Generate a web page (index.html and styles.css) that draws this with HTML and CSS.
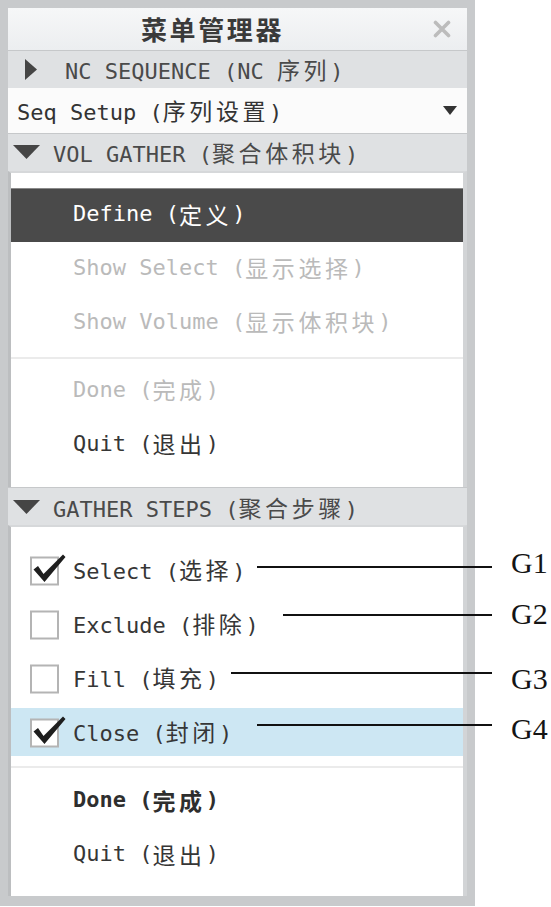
FILE: index.html
```html
<!DOCTYPE html>
<html lang="zh-CN">
<head>
<meta charset="utf-8">
<title>菜单管理器</title>
<link rel="stylesheet" href="styles.css">
</head>
<body>
<div class="page">
  <div class="panel">
    <div class="titlebar">
      <div class="title">菜单管理器</div>
      <div class="close">
        <svg width="18" height="18" viewBox="0 0 18 18"><path d="M2.5 2.5L15.5 15.5M15.5 2.5L2.5 15.5" stroke="#bcbcbc" stroke-width="3.6" stroke-linecap="round"/></svg>
      </div>
    </div>

    <div class="hdr">
      <svg class="tri-right" width="12" height="21" viewBox="0 0 12 21"><polygon points="0,0 12,10.5 0,21" fill="#454545"/></svg>
      <span>NC SEQUENCE (NC <span class="zh">序列</span>)</span>
    </div>

    <div class="seq">
      <span>Seq Setup (<span class="zh">序列设置</span>)</span>
      <svg width="14" height="9" viewBox="0 0 14 9"><polygon points="0,0 14,0 7,9" fill="#333"/></svg>
    </div>

    <div class="hdr">
      <svg class="tri-down" width="27" height="14" viewBox="0 0 27 14"><polygon points="0,0 27,0 13.5,14" fill="#454545"/></svg>
      <span>VOL GATHER (<span class="zh">聚合体积块</span>)</span>
    </div>

    <div class="body body-vol">
      <div class="item active">Define (<span class="zh">定义</span>)</div>
      <div class="item off">Show Select (<span class="zh">显示选择</span>)</div>
      <div class="item off">Show Volume (<span class="zh">显示体积块</span>)</div>
      <div class="sep"></div>
      <div class="item off">Done (<span class="zh">完成</span>)</div>
      <div class="item">Quit (<span class="zh">退出</span>)</div>
    </div>

    <div class="hdr">
      <svg class="tri-down" width="27" height="14" viewBox="0 0 27 14"><polygon points="0,0 27,0 13.5,14" fill="#454545"/></svg>
      <span>GATHER STEPS (<span class="zh">聚合步骤</span>)</span>
    </div>

    <div class="body body-steps">
      <div class="chk">
        <svg width="36" height="32" viewBox="0 0 36 32"><rect x="1" y="3.5" width="27" height="27" fill="#fff" stroke="#b4b4b4" stroke-width="2"/><path d="M3.5 15.5L8 12L13.5 20L33 0.5L35.5 3L14.5 28Z" fill="#1e1e1e"/></svg>
        <span class="lbl">Select (<span class="zh">选择</span>)</span>
      </div>
      <div class="chk">
        <svg width="36" height="32" viewBox="0 0 36 32"><rect x="1" y="3.5" width="27" height="27" fill="#fff" stroke="#b4b4b4" stroke-width="2"/></svg>
        <span class="lbl">Exclude (<span class="zh">排除</span>)</span>
      </div>
      <div class="chk">
        <svg width="36" height="32" viewBox="0 0 36 32"><rect x="1" y="3.5" width="27" height="27" fill="#fff" stroke="#b4b4b4" stroke-width="2"/></svg>
        <span class="lbl">Fill (<span class="zh">填充</span>)</span>
      </div>
      <div class="chk hl">
        <svg width="36" height="32" viewBox="0 0 36 32"><rect x="1" y="3.5" width="27" height="27" fill="#fff" stroke="#b4b4b4" stroke-width="2"/><path d="M3.5 15.5L8 12L13.5 20L33 0.5L35.5 3L14.5 28Z" fill="#1e1e1e"/></svg>
        <span class="lbl">Close (<span class="zh">封闭</span>)</span>
      </div>
      <div class="sep sep2"></div>
      <div class="item strong">Done (<span class="zh">完成</span>)</div>
      <div class="item">Quit (<span class="zh">退出</span>)</div>
    </div>
  </div>

  <div class="callout line1"></div>
  <div class="callout line2"></div>
  <div class="callout line3"></div>
  <div class="callout line4"></div>
  <div class="tag tag1">G1</div>
  <div class="tag tag2">G2</div>
  <div class="tag tag3">G3</div>
  <div class="tag tag4">G4</div>
</div>
</body>
</html>
```

FILE: styles.css
```css
* { box-sizing: border-box; }
html, body { margin: 0; padding: 0; background: #fff; }

.page {
  position: relative;
  width: 551px;
  height: 907px;
}

.panel {
  width: 475px;
  height: 906px;
  background: #c8cacc;
  padding: 8px 8px 10px 8px;
  display: flex;
  flex-direction: column;
  font-family: "DejaVu Sans Mono", "Noto Sans CJK SC", monospace;
  font-size: 22px;
  color: #363636;
}

.zh {
  font-family: "Noto Sans CJK SC", sans-serif;
  font-size: 23px;
  letter-spacing: 3.6px;
}

.titlebar {
  height: 42px;
  display: flex;
  align-items: center;
  background: linear-gradient(#f6f7f8, #eceef0);
}
.title {
  flex: 1;
  text-align: center;
  font-family: "Noto Sans CJK SC", sans-serif;
  font-weight: 700;
  font-size: 26px;
  letter-spacing: 2.6px;
  color: #3a3a3a;
}
.close {
  width: 50px;
  display: flex;
  justify-content: center;
  align-items: center;
}

.hdr {
  height: 38px;
  display: flex;
  align-items: center;
  background: #dfe1e3;
  border-top: 1px solid #c6c8ca;
  color: #4a4a4a;
}
.hdr:first-of-type { height: 37px; }
.tri-right { margin-left: 17px; margin-right: 28px; }
.tri-down { margin-left: 5px; margin-right: 13px; }

.seq {
  height: 45px;
  display: flex;
  align-items: center;
  justify-content: space-between;
  background: #fbfbfb;
  padding-left: 9px;
  padding-right: 10px;
  color: #333;
}

.body {
  background: #fff;
  border-left: 3px solid #bcbec0;
  border-right: 4px solid #d2d4d6;
  border-top: 2px solid #d6d8da;
}
.body-vol { height: 317px; padding-top: 15px; }
.body-steps { height: 371px; padding-top: 16px; }

.item {
  height: 54px;
  display: flex;
  align-items: center;
  padding-left: 62px;
  padding-bottom: 3px;
}
.item.active { background: #4a4a4a; color: #fff; border-top: 1px solid #8a8a8a; }
.item.off { color: #bababa; }
.item.strong { font-weight: 700; color: #2e2e2e; }
.item.strong .zh { font-weight: 700; }

.sep { height: 14px; padding-top: 7px; }
.sep2 { height: 15px; }
.sep::before {
  content: "";
  display: block;
  height: 2px;
  background: #ebebeb;
}

.chk {
  height: 54px;
  padding: 3px 0 3px 19px;
  display: flex;
  align-items: center;
  gap: 7px;
}
.chk .lbl { margin-bottom: 3px; }
.chk.hl { background: #cde7f3; background-clip: content-box; padding-left: 0; }
.chk.hl svg { margin-left: 19px; }

.callout {
  position: absolute;
  height: 2px;
  background: #111;
}
.line1 { top: 566px; left: 257px; width: 235px; }
.line2 { top: 614px; left: 283px; width: 209px; }
.line3 { top: 672px; left: 231px; width: 261px; }
.line4 { top: 724px; left: 257px; width: 235px; }

.tag {
  position: absolute;
  left: 511px;
  font-family: "Liberation Serif", serif;
  font-size: 30px;
  line-height: 30px;
  color: #141414;
}
.tag1 { top: 548px; }
.tag2 { top: 599px; }
.tag3 { top: 664px; }
.tag4 { top: 714px; }
```
